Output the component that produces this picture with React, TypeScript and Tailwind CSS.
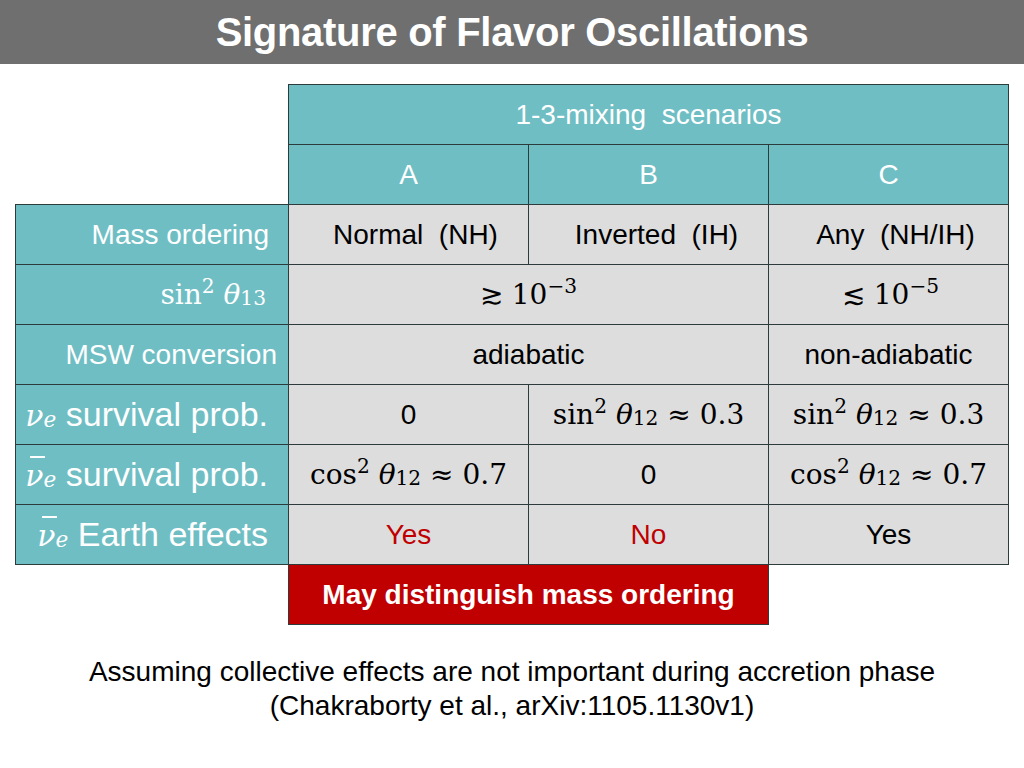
import * as React from 'react';

const sans = "font-['Liberation_Sans',Arial,sans-serif]";
const serif = "font-['DejaVu_Serif','Liberation_Serif',serif]";

function Theta({ sub }: { sub: string }) {
  return (
    <span>
      <i>θ</i>
      <sub className="text-[0.72em] relative top-[0.05em]">{sub}</sub>
    </span>
  );
}

function Trig({ fn, sub, val }: { fn: string; sub: string; val: string }) {
  return (
    <span className={`${serif} text-[28px] whitespace-nowrap`}>
      {fn}
      <sup className="text-[0.72em]">2</sup> <Theta sub={sub} /> ≈ {val}
    </span>
  );
}

function Nu({ bar }: { bar?: boolean }) {
  return (
    <span className={`${serif} text-[30px]`}>
      <i className="relative inline-block">
        ν
        {bar && (
          <span className="absolute left-[5px] top-[3px] w-[15px] h-[2px] bg-white" />
        )}
      </i>
      <sub className="text-[0.72em] italic relative top-[0.05em]">e</sub>
    </span>
  );
}

const teal = 'bg-[#6fbec4] text-white';
const gray = 'bg-[#dddddd] text-black';
const cell = 'border border-[#2e3b3c] h-[60px] p-0 align-middle';

export default function App() {
  return (
    <div className={`w-[1024px] h-[768px] bg-white ${sans} overflow-hidden`}>
      <div className="h-[64px] bg-[#6f6f6f] flex items-center justify-center">
        <h1 className="text-white font-bold text-[40px] tracking-[-0.3px]">
          Signature of Flavor Oscillations
        </h1>
      </div>

      <div className="pl-[15px] pt-[20px]">
        <table className="border-collapse table-fixed w-[993px]">
          <colgroup>
            <col className="w-[273px]" />
            <col className="w-[240px]" />
            <col className="w-[240px]" />
            <col className="w-[240px]" />
          </colgroup>
          <tbody>
            <tr>
              <td rowSpan={2} className="p-0" />
              <td colSpan={3} className={`${cell} ${teal} text-center text-[28px]`}>
                1-3-mixing&nbsp; scenarios
              </td>
            </tr>
            <tr>
              <td className={`${cell} ${teal} text-center text-[28px]`}>A</td>
              <td className={`${cell} ${teal} text-center text-[28px]`}>B</td>
              <td className={`${cell} ${teal} text-center text-[28px]`}>C</td>
            </tr>
            <tr>
              <td className={`${cell} ${teal} text-right pr-[19px] text-[28px]`}>Mass ordering</td>
              <td className={`${cell} ${gray} text-center pl-[14px] text-[28px]`}>Normal&nbsp; (NH)</td>
              <td className={`${cell} ${gray} text-center pl-[16px] text-[28px]`}>Inverted&nbsp; (IH)</td>
              <td className={`${cell} ${gray} text-center pl-[14px] text-[28px]`}>Any&nbsp; (NH/IH)</td>
            </tr>
            <tr>
              <td className={`${cell} ${teal} text-right pr-[22px]`}>
                <span className={`${serif} text-[28px]`}>
                  sin<sup className="text-[0.72em]">2</sup> <Theta sub="13" />
                </span>
              </td>
              <td colSpan={2} className={`${cell} ${gray} text-center`}>
                <span className={`${serif} text-[28px]`}>
                  ≳ 10<sup className="text-[0.72em]">−3</sup>
                </span>
              </td>
              <td className={`${cell} ${gray} text-center pl-[4px]`}>
                <span className={`${serif} text-[28px]`}>
                  ≲ 10<sup className="text-[0.72em]">−5</sup>
                </span>
              </td>
            </tr>
            <tr>
              <td className={`${cell} ${teal} text-right pr-[11px] text-[28px]`}>MSW conversion</td>
              <td colSpan={2} className={`${cell} ${gray} text-center text-[28px]`}>adiabatic</td>
              <td className={`${cell} ${gray} text-center text-[28px]`}>non-adiabatic</td>
            </tr>
            <tr>
              <td className={`${cell} ${teal} text-right pr-[20px] text-[34px]`}>
                <Nu /> survival prob.
              </td>
              <td className={`${cell} ${gray} text-center text-[28px]`}>0</td>
              <td className={`${cell} ${gray} text-center`}>
                <Trig fn="sin" sub="12" val="0.3" />
              </td>
              <td className={`${cell} ${gray} text-center`}>
                <Trig fn="sin" sub="12" val="0.3" />
              </td>
            </tr>
            <tr>
              <td className={`${cell} ${teal} text-right pr-[20px] text-[34px]`}>
                <Nu bar /> survival prob.
              </td>
              <td className={`${cell} ${gray} text-center`}>
                <Trig fn="cos" sub="12" val="0.7" />
              </td>
              <td className={`${cell} ${gray} text-center text-[28px]`}>0</td>
              <td className={`${cell} ${gray} text-center`}>
                <Trig fn="cos" sub="12" val="0.7" />
              </td>
            </tr>
            <tr>
              <td className={`${cell} ${teal} text-right pr-[20px] text-[34px]`}>
                <Nu bar /> Earth effects
              </td>
              <td className={`${cell} bg-[#dddddd] text-[#c00000] text-center text-[28px]`}>Yes</td>
              <td className={`${cell} bg-[#dddddd] text-[#c00000] text-center text-[28px]`}>No</td>
              <td className={`${cell} ${gray} text-center text-[28px]`}>Yes</td>
            </tr>
            <tr>
              <td className="p-0" />
              <td colSpan={2} className={`${cell} bg-[#c00000] text-white text-center font-bold text-[28px]`}>
                May distinguish mass ordering
              </td>
              <td className="p-0" />
            </tr>
          </tbody>
        </table>
      </div>

      <div className="mt-[30px] text-center text-black text-[28px] leading-[34px]">
        <p>Assuming collective effects are not important during accretion phase</p>
        <p>(Chakraborty et al., arXiv:1105.1130v1)</p>
      </div>
    </div>
  );
}
